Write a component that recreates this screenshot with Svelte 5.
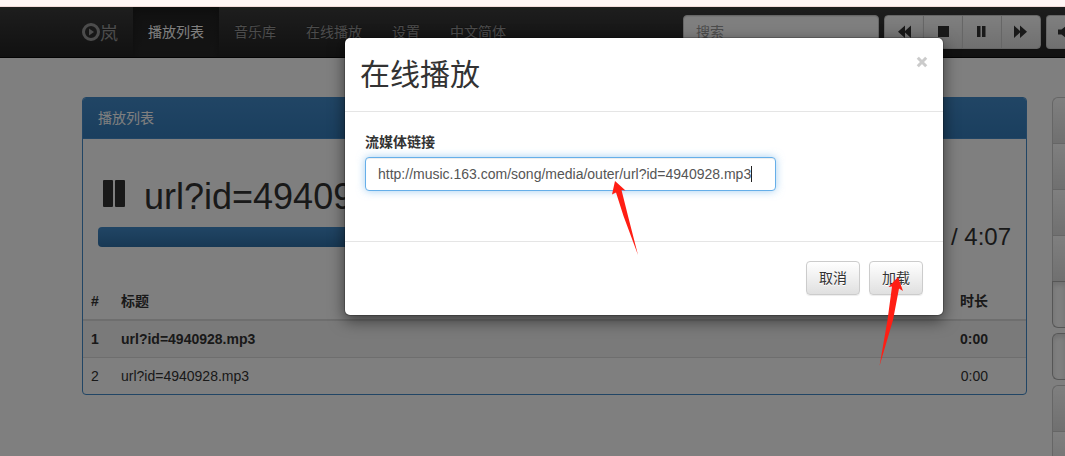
<script>
  const links = ['播放列表', '音乐库', '在线播放', '设置', '中文简体'];
  const tracks = [
    { id: 1, title: 'url?id=4940928.mp3', time: '0:00', current: true },
    { id: 2, title: 'url?id=4940928.mp3', time: '0:00', current: false }
  ];
  const controls = [
    { label: '上一首', d: 'M8 .5v5.500L14 .5v12.500L8 7.500V13L1 6.750z' },
    { label: '停止', d: 'M2 1h11v11H2z' },
    { label: '暂停', d: 'M2 1h3.500v11H2zM7 1h3.500v11H7z' },
    { label: '下一首', d: 'M0 .5l6 5.500V.5l7 6.250L6 13V7.500L0 13z' }
  ];
  let url = $state('http://music.163.com/song/media/outer/url?id=4940928.mp3');
  let query = $state('');
</script>

<div class="strip"></div>
<div class="page">
  <nav class="navbar">
    <a class="brand" href="#home">
      <svg width="18" height="18" viewBox="0 0 18 18" aria-hidden="true">
        <circle cx="9" cy="9" r="7.5" fill="none" stroke="currentColor" stroke-width="3" />
        <path d="M7 5.5l5 3.5-5 3.5z" fill="currentColor" />
      </svg><span>岚</span>
    </a>
    <ul class="links">
      {#each links as link, i}
        <li><a href="#nav-{i}" class:active={i === 0}>{link}</a></li>
      {/each}
    </ul>
    <div class="tools">
      <input class="control search" type="text" placeholder="搜索" aria-label="搜索" bind:value={query} />
      <div class="group">
        {#each controls as c}
          <button class="btn" type="button" aria-label={c.label}>
            <svg width="14" height="14" viewBox="0 0 14 14"><path d={c.d} fill="currentColor" /></svg>
          </button>
        {/each}
      </div>
      <button class="btn volume" type="button" aria-label="音量">
        <svg width="14" height="14" viewBox="0 0 14 14"><path d="M0 4.5h3.500L8 1v12L3.500 9.500H0z" fill="currentColor" /></svg>
      </button>
    </div>
  </nav>

  <div class="content">
    <main class="panel">
      <div class="heading">播放列表</div>
      <div class="body">
        <h1>
          <svg width="36" height="36" viewBox="0 0 36 36" aria-hidden="true">
            <path d="M6 4h8a1 1 0 0 1 1 1v25a1 1 0 0 1-1 1H6a1 1 0 0 1-1-1V5a1 1 0 0 1 1-1zM18 4h8a1 1 0 0 1 1 1v25a1 1 0 0 1-1 1h-8a1 1 0 0 1-1-1V5a1 1 0 0 1 1-1z" fill="currentColor" />
          </svg>
          <span>url?id=4940928.mp3</span>
        </h1>
        <div class="playback">
          <div class="progress"></div>
          <span class="time">/ 4:07</span>
        </div>
      </div>
      <table>
        <thead>
          <tr><th class="num">#</th><th>标题</th><th class="duration">时长</th></tr>
        </thead>
        <tbody>
          {#each tracks as t}
            <tr class:current={t.current}>
              <td class="num">{t.id}</td><td>{t.title}</td><td class="duration">{t.time}</td>
            </tr>
          {/each}
        </tbody>
      </table>
    </main>
    <aside class="side">
      <div class="stack">
        <button type="button" aria-label="添加"></button>
        <button type="button" aria-label="清空"></button>
        <button type="button" aria-label="保存"></button>
        <button type="button" aria-label="排序"></button>
        <button type="button" aria-label="循环" class="pressed"></button>
      </div>
      <div class="stack">
        <button type="button" aria-label="随机" class="pressed"></button>
      </div>
      <div class="stack">
        <button type="button" aria-label="单曲"></button>
        <button type="button" aria-label="更多"></button>
      </div>
    </aside>
  </div>

  <div class="overlay">
    <div class="modal" role="dialog" aria-labelledby="dialog-title">
      <header>
        <h2 id="dialog-title">在线播放</h2>
        <button class="close" type="button" aria-label="关闭">
          <svg width="12" height="20" viewBox="0 0 12 20"><path d="M1.800 4.800l8.400 8.400M10.200 4.800l-8.400 8.400" fill="none" stroke="currentColor" stroke-width="3" /></svg>
        </button>
      </header>
      <div class="form">
        <label for="stream-url">流媒体链接</label>
        <div class="field">
          <input id="stream-url" class="control focused" type="text" bind:value={url} />
          <span class="caret"></span>
          <svg class="arrow first" width="30" height="78" viewBox="0 0 30 78" aria-hidden="true">
            <path d="M5 1L15.500 10.500 11.500 10 18 36 28 75 13.500 36 6 12.500 2 14.500z" fill="#ff1e14" />
          </svg>
        </div>
      </div>
      <footer>
        <button class="btn" type="button">取消</button>
        <button class="btn load" type="button">加载
          <svg class="arrow second" width="28" height="94" viewBox="0 0 28 94" aria-hidden="true">
            <path d="M20 1L25 15 21 12.500 15 44 1.500 90 9.500 44 14 10.500 10.500 11z" fill="#ff1e14" />
          </svg>
        </button>
      </footer>
    </div>
  </div>
</div>

<style>
  :global(body) {
    margin: 0;
    overflow: hidden;
    font: 14px/20px "Liberation Sans", "Noto Sans CJK SC", sans-serif;
    color: #333;
  }
  * { box-sizing: border-box; }
  button, input { font: inherit; }
  svg { display: block; flex: none; }

  .strip {
    height: 7px;
    background: #fff6f5;
    border-bottom: 1px solid #f3dcda;
  }
  .page {
    position: relative;
    min-height: calc(100vh - 7px);
    background: #fff;
    overflow: hidden;
  }

  .navbar {
    display: flex;
    height: 51px;
    padding-left: 82px;
    background: linear-gradient(#3c3c3c, #222);
    border-bottom: 1px solid #080808;
  }
  .navbar a {
    color: #999;
    text-decoration: none;
    text-shadow: 0 -1px 0 rgba(0, 0, 0, .25);
  }
  .brand {
    display: flex;
    align-items: center;
    padding-right: 15px;
    font-size: 18px;
    line-height: 24px;
  }
  .brand span { padding-top: 3px; }
  .links {
    display: flex;
    margin: 0;
    padding: 0;
    list-style: none;
  }
  .links a {
    display: block;
    padding: 15px;
    white-space: nowrap;
  }
  .links .active {
    color: #fff;
    background: linear-gradient(#222, #282828);
    box-shadow: inset 0 3px 9px rgba(0, 0, 0, .25);
  }
  .tools {
    display: flex;
    gap: 5px;
    margin-left: auto;
    padding: 8px 0;
  }

  .control {
    display: block;
    width: 100%;
    height: 34px;
    padding: 6px 12px;
    color: #555;
    background: #fff;
    border: 1px solid #ccc;
    border-radius: 4px;
    outline: 0;
    box-shadow: inset 0 1px 1px rgba(0, 0, 0, .075);
  }
  .control::placeholder { color: #999; }
  .search { width: 196px; }
  .focused {
    border-color: #66afe9;
    box-shadow: inset 0 1px 1px rgba(0, 0, 0, .075), 0 0 8px rgba(102, 175, 233, .6);
    caret-color: transparent;
  }

  .btn {
    height: 34px;
    padding: 6px 12px;
    color: #333;
    background: linear-gradient(#fff, #e0e0e0);
    border: 1px solid #ccc;
    border-radius: 4px;
    text-shadow: 0 1px 0 #fff;
    box-shadow: inset 0 1px 0 rgba(255, 255, 255, .15), 0 1px 1px rgba(0, 0, 0, .075);
    white-space: nowrap;
  }
  .group { display: flex; }
  .group .btn { border-radius: 0; }
  .group .btn + .btn { margin-left: -1px; }
  .group .btn:first-child { border-radius: 4px 0 0 4px; }
  .group .btn:last-child { border-radius: 0 4px 4px 0; }
  .volume {
    width: 19px;
    padding: 6px 0 6px 11px;
    border-right: 0;
    border-radius: 4px 0 0 4px;
    overflow: hidden;
  }

  .content {
    display: grid;
    grid-template-columns: minmax(0, 1fr) 13px;
    gap: 25px;
    align-items: start;
    padding: 39px 0 0 82px;
  }
  .panel {
    border: 1px solid #428bca;
    border-radius: 4px;
    overflow: hidden;
  }
  .heading {
    padding: 10px 15px;
    color: #fff;
    background: linear-gradient(#428bca, #357ebd);
    border-bottom: 1px solid #428bca;
  }
  .body { padding: 37px 15px 31px; }
  h1 {
    display: flex;
    gap: 10px;
    margin: 0;
    font-size: 36px;
    font-weight: 400;
    line-height: 42px;
  }
  .playback {
    display: flex;
    justify-content: space-between;
    align-items: center;
    height: 30px;
    margin-top: 4px;
  }
  .progress {
    width: 80%;
    height: 20px;
    background: linear-gradient(#428bca, #3071a9);
    border-radius: 4px;
  }
  .time { font-size: 24px; line-height: 32px; }

  table {
    width: 100%;
    border-collapse: separate;
    border-spacing: 0;
  }
  th, td { padding: 8px; text-align: left; }
  th { height: 38px; border-bottom: 2px solid #ddd; }
  .num { width: 30px; }
  .duration { padding-right: 38px; text-align: right; }
  .current td { font-weight: 700; background: #f5f5f5; }
  .current + tr td { border-top: 1px solid #ddd; }

  .side {
    display: flex;
    flex-direction: column;
    gap: 5px;
  }
  .stack { display: flex; flex-direction: column; }
  .stack button {
    height: 47px;
    padding: 0;
    background: linear-gradient(#fff, #e0e0e0);
    border: 1px solid #ccc;
    border-right: 0;
  }
  .stack button + button { margin-top: -1px; }
  .stack button:first-child { border-top-left-radius: 6px; }
  .stack button:last-child { border-bottom-left-radius: 6px; }
  .stack .pressed {
    background: #fff;
    border-color: #adadad;
    box-shadow: inset 0 3px 5px rgba(0, 0, 0, .125);
  }

  .overlay {
    position: absolute;
    inset: 0;
    padding: 30px 0 0 344px;
    background: rgba(0, 0, 0, .5);
  }
  .modal {
    width: 100%;
    max-width: 600px;
    background: #fff;
    background-clip: padding-box;
    border: 1px solid rgba(0, 0, 0, .2);
    border-radius: 6px;
    box-shadow: 0 5px 15px rgba(0, 0, 0, .5);
  }
  header {
    display: flex;
    justify-content: space-between;
    align-items: flex-start;
    padding: 15px;
    border-bottom: 1px solid #e5e5e5;
  }
  h2 {
    margin: 0;
    font-size: 30px;
    font-weight: 400;
    line-height: 43px;
  }
  .close {
    padding: 0;
    color: #000;
    background: none;
    border: 0;
    opacity: .2;
  }
  .form { padding: 20px 20px 50px; }
  label {
    display: block;
    margin-bottom: 5px;
    font-weight: 700;
  }
  .field { position: relative; width: 411px; max-width: 100%; }
  .caret {
    position: absolute;
    top: 9px;
    left: 386px;
    width: 1px;
    height: 16px;
    background: #222;
  }
  footer {
    display: flex;
    justify-content: flex-end;
    gap: 9px;
    padding: 19px 20px 20px;
    border-top: 1px solid #e5e5e5;
  }
  .load { position: relative; }
  .arrow { position: absolute; z-index: 1; pointer-events: none; }
  .first { top: 23px; left: 245px; }
  .second { top: 14px; left: 8px; }
</style>
